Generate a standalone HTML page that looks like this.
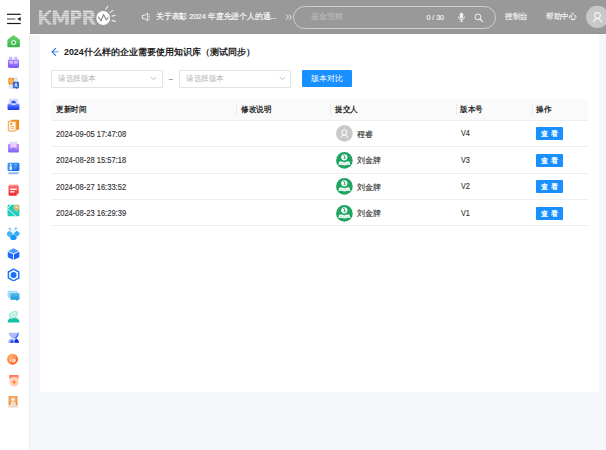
<!DOCTYPE html>
<html><head><meta charset="utf-8">
<style>
*{margin:0;padding:0;box-sizing:border-box}
html,body{width:606px;height:450px;overflow:hidden}
body{background:#f5f7fb;font-family:"Liberation Sans",sans-serif;position:relative;color:#333}
.abs{position:absolute}
#side{left:0;top:0;width:30px;height:450px;background:#fff;box-shadow:inset -1px 0 0 #fff}
#sb{left:29px;top:35px;width:1px;height:415px;background:#e9ebef}
#head{left:30px;top:0;width:576px;height:33.6px;background:#999;box-shadow:inset 0 -1px 0 #929292}
#strip{left:29px;top:33.6px;width:577px;height:1.4px;background:#fff}
#card{left:40px;top:35px;width:559px;height:357px;background:#fff}
.ic{position:absolute;left:7px;width:13px;height:13px}
.t{position:absolute;white-space:nowrap;line-height:1}
.k{-webkit-text-stroke:0.14px currentColor}
.sel{position:absolute;top:70px;height:17.6px;border:1px solid #e3e3e3;border-radius:1px;background:#fff}
.th{position:absolute;top:98.8px;height:22px;left:50.6px;width:537.6px;background:#fafafa;border-bottom:1px solid #efefef}
.row{position:absolute;left:50.6px;width:537.6px;border-bottom:1px solid #efefef}
.sep{position:absolute;top:104px;width:1px;height:11px;background:#ebebeb}
.btn{position:absolute;left:536px;width:27px;height:13px;background:#1890ff;color:#fff;font-size:7.2px;font-weight:bold;text-align:center;line-height:13.4px;border-radius:1px;letter-spacing:0.1px}
</style></head><body>
<div id="side" class="abs">
  <!-- hamburger -->
  <svg class="abs" style="left:5px;top:10px" width="18" height="16" viewBox="5 10 18 16">
    <rect x="7" y="13.7" width="13.7" height="1.2" fill="#1a1a1a"/>
    <rect x="7" y="18.4" width="8.3" height="1.2" fill="#666"/>
    <path d="M20.7 16.9 L17.3 19 L20.7 21.1Z" fill="#1a1a1a"/>
    <rect x="7" y="22.9" width="13.7" height="1.2" fill="#1a1a1a"/>
  </svg>
<svg class="ic" style="top:34.5px" width="14" height="14" viewBox="0 0 14 14"><defs><linearGradient id="g1" x1="0" y1="0" x2="0" y2="1"><stop offset="0" stop-color="#6fd46f"/><stop offset="1" stop-color="#39b249"/></linearGradient></defs><path d="M5.9 0.9 Q7.15 -0.1 8.4 0.9 L13.2 4.7 Q13.9 5.3 13.9 6.2 V11.8 Q13.9 13.3 12.4 13.3 H1.9 Q0.4 13.3 0.4 11.8 V6.2 Q0.4 5.3 1.1 4.7 Z" fill="url(#g1)"/><circle cx="7.2" cy="8.1" r="2.2" fill="none" stroke="#fff" stroke-width="1.05"/><path d="M5.4 9.6 L4.7 10.9 L6.3 10.2 Z" fill="#fff"/></svg>
<svg class="ic" style="top:55.7px" width="14" height="14" viewBox="0 0 14 14"><defs><linearGradient id="g2" x1="0" y1="0" x2="0" y2="1"><stop offset="0" stop-color="#a88bff"/><stop offset="1" stop-color="#7a58f2"/></linearGradient></defs><path d="M2 1.6 Q2 0.7 2.9 0.7 H4.9 Q5.8 0.7 5.8 1.6 V4.6 H2 Z M7.8 1.6 Q7.8 0.7 8.7 0.7 H10.4 Q11.3 0.7 11.3 1.6 V4.6 H7.8 Z" fill="#c7bbff"/><path d="M1 4.8 Q1 4.1 1.7 4.1 H12.3 Q13 4.1 13 4.8 V11.4 Q13 13 11.4 13 H2.6 Q1 13 1 11.4 Z" fill="url(#g2)"/><path d="M2.8 5.4 H5.6 Q6.4 5.4 6.4 6.2 V8.4 H3.6 Q2.8 8.4 2.8 7.6 Z M7.6 5.4 H10.6 Q11.4 5.4 11.4 6.2 V7.6 Q11.4 8.4 10.6 8.4 H7.6 Z" fill="#e6c8ff" opacity="0.8"/></svg>
<svg class="ic" style="top:76.9px" width="14" height="14" viewBox="0 0 14 14"><rect x="1.9" y="0.3" width="9.8" height="12.3" fill="#dde6f8"/><path d="M2.4 1.1 H6.9 Q7.7 1.1 7.7 1.9 V7 Q7.7 7.8 6.9 7.8 H3.6 L2.2 9 V7.8 Q1.4 7.8 1.4 7 V2.1 Q1.4 1.1 2.4 1.1Z" fill="#f39a1e"/><circle cx="4.5" cy="4.3" r="1.5" fill="none" stroke="#fde0b4" stroke-width="0.8"/><path d="M7.1 5.1 H12.2 Q13 5.1 13 5.9 V11.4 Q13 12.2 12.2 12.2 H11.6 L10.6 13.1 L9.8 12.2 H7.1 Q6.3 12.2 6.3 11.4 V5.9 Q6.3 5.1 7.1 5.1Z" fill="#3b6fd6"/><path d="M8.4 10.7 L9.65 6.6 L10.9 10.7 M8.9 9.3 H10.4" stroke="#fff" stroke-width="0.75" fill="none"/></svg>
<svg class="ic" style="top:98.1px" width="14" height="14" viewBox="0 0 14 14"><defs><linearGradient id="g4" x1="0" y1="0" x2="0" y2="1"><stop offset="0" stop-color="#8fa4ff"/><stop offset="0.4" stop-color="#4263ff"/><stop offset="1" stop-color="#1b39e6"/></linearGradient></defs><rect x="1.9" y="0.8" width="10.2" height="6" fill="#d3dbff"/><path d="M4.5 5.6 Q4.1 3.6 6 3.3 Q7 1.9 8.3 3.3 Q10.1 3.5 9.6 5.6 Z" fill="#2f56f5"/><path d="M0.6 6.1 H4.2 L5 7.4 H9 L9.8 6.1 H13.4 V11.8 Q13.4 12.8 12.4 12.8 H1.6 Q0.6 12.8 0.6 11.8 Z" fill="url(#g4)"/></svg>
<svg class="ic" style="top:119.3px" width="14" height="14" viewBox="0 0 14 14"><path d="M4.4 0.7 H12.4 Q13 0.7 13 1.3 V10.9 Q13 11.5 12.4 11.5 H4.4 Z" fill="#f28a1e"/><rect x="1.4" y="2.4" width="8.4" height="10.6" rx="0.7" fill="#fff4e4" stroke="#f39a35" stroke-width="1"/><circle cx="4.6" cy="5.2" r="1.1" fill="#f28a1e"/><path d="M3.6 8 H7.6 M3.6 10 H7.6" stroke="#f6ae60" stroke-width="0.9"/></svg>
<svg class="ic" style="top:140.5px" width="14" height="14" viewBox="0 0 14 14"><defs><linearGradient id="g6" x1="0" y1="0" x2="0" y2="1"><stop offset="0" stop-color="#c98cff"/><stop offset="1" stop-color="#7d66f5"/></linearGradient></defs><rect x="2.6" y="0.8" width="8.8" height="3" fill="#e3d6ff"/><path d="M1.2 3.2 H12.8 V11 Q12.8 12.4 11.4 12.4 H2.6 Q1.2 12.4 1.2 11 Z" fill="url(#g6)"/><path d="M3.6 3.2 V8.4 L7 6.4 L10.4 8.4 V3.2 Z" fill="#f2d9ff" opacity="0.85"/></svg>
<svg class="ic" style="top:161.7px" width="14" height="14" viewBox="0 0 14 14"><defs><linearGradient id="g7" x1="0" y1="0" x2="1" y2="1"><stop offset="0" stop-color="#42a6ff"/><stop offset="1" stop-color="#1462e0"/></linearGradient></defs><rect x="0.6" y="0.7" width="12.8" height="9" rx="1.4" fill="url(#g7)"/><circle cx="4" cy="2.9" r="1" fill="#fff"/><path d="M2.7 8.6 V4.6 H5.3 V8.6" fill="#eaf4ff"/><path d="M7.4 2.8 H11.2 M8.4 4.6 H11.2 M7.4 6.4 H10.2" stroke="#a6ceff" stroke-width="0.6"/><rect x="1.2" y="11" width="11.6" height="2.2" rx="1" fill="#8cbcff"/></svg>
<svg class="ic" style="top:182.9px" width="14" height="14" viewBox="0 0 14 14"><defs><linearGradient id="g8" x1="0" y1="0" x2="0" y2="1"><stop offset="0" stop-color="#ff6a6a"/><stop offset="1" stop-color="#f02828"/></linearGradient></defs><path d="M1.6 3.6 Q1.6 2.4 2.8 2.4 H11.4 Q12.6 2.4 12.6 3.6 V11.2 L10.2 13.6 H2.8 Q1.6 13.6 1.6 12.4 Z" fill="url(#g8)"/><path d="M3.2 1 V3.6 M5.6 1 V3.6 M8 1 V3.6 M10.4 1 V3.6" stroke="#ff9a9a" stroke-width="0.9"/><rect x="3.4" y="5.9" width="7.2" height="1.5" fill="#fff"/><rect x="3.4" y="8.8" width="4.6" height="1.5" fill="#fff"/><path d="M12.6 11.2 L10.2 13.6 V11.8 Q10.2 11.2 10.8 11.2 Z" fill="#ffc2c2"/></svg>
<svg class="ic" style="top:204.1px" width="14" height="14" viewBox="0 0 14 14"><rect x="0.6" y="0.8" width="12.8" height="12.4" rx="1" fill="#1fcdb9"/><path d="M4.4 0.8 L0.6 4.8 L9.6 13.2" stroke="#fff" stroke-width="1" fill="none"/><path d="M10.2 0.9 Q12.9 0.9 12.9 3.7 Q12.9 5.4 10.2 7.9 Q7.5 5.4 7.5 3.7 Q7.5 0.9 10.2 0.9Z" fill="#f4a33b" stroke="#fff" stroke-width="0.5"/><circle cx="10.2" cy="3.6" r="1" fill="#fff"/></svg>
<svg class="ic" style="top:226.6px" width="14" height="14" viewBox="0 0 14 14"><path d="M3.1 2.1 L6.5 4.6 L9.5 1.7" stroke="#c2defc" stroke-width="1" fill="none"/><circle cx="3.1" cy="2.1" r="1.5" fill="#92caff"/><circle cx="9.5" cy="1.7" r="1.5" fill="#92caff"/><rect x="0" y="4.8" width="5.6" height="5.6" rx="1.8" transform="rotate(45 2.8 7.6)" fill="#45b4f5"/><rect x="8" y="4.6" width="5.2" height="5.2" rx="1.7" transform="rotate(45 10.6 7.2)" fill="#35acf5"/><rect x="3.9" y="8.5" width="6" height="6" rx="1.9" transform="rotate(45 6.9 11.5)" fill="#1898f5"/><circle cx="6.6" cy="6.2" r="1.2" fill="#d9ecff" opacity="0.8"/></svg>
<svg class="ic" style="top:246.5px" width="14" height="14" viewBox="0 0 14 14"><path d="M6.4 1.5 Q7 1.2 7.6 1.5 L12.9 4.2 L7 7.1 L1.1 4.2 Z" fill="#4f9cff"/><path d="M0.8 5 L6.5 7.9 V13.7 L1.4 11.2 Q0.8 10.9 0.8 10.2 Z" fill="#1e6cff"/><path d="M13.3 5 L7.5 7.9 V13.7 L12.7 11.2 Q13.3 10.9 13.3 10.2 Z" fill="#1a63f5"/></svg>
<svg class="ic" style="top:267.7px" width="14" height="14" viewBox="0 0 14 14"><path d="M7.1 1.1 L12.7 4.3 V10.7 L7.1 13.9 L1.5 10.7 V4.3 Z" fill="none" stroke="#1f74ff" stroke-width="1.6" stroke-linejoin="round"/><circle cx="7.1" cy="7.5" r="3.2" fill="#1a6ff8"/></svg>
<svg class="ic" style="top:288.9px" width="14" height="14" viewBox="0 0 14 14"><defs><linearGradient id="g13" x1="0" y1="0" x2="0" y2="1"><stop offset="0" stop-color="#5cc0f0"/><stop offset="1" stop-color="#0f8fd8"/></linearGradient></defs><rect x="0.7" y="1.8" width="10.5" height="7.6" rx="1" fill="#a3daf6"/><path d="M3.6 5 Q3.6 4.4 4.2 4.4 H12.8 Q13.4 4.4 13.4 5 V11 Q13.4 11.6 12.8 11.6 H11.6 L10.2 12.9 L9.8 11.6 H4.2 Q3.6 11.6 3.6 11 Z" fill="url(#g13)"/><path d="M2.2 3.6 H9.4" stroke="#d2effc" stroke-width="0.6"/></svg>
<svg class="ic" style="top:310.1px" width="14" height="14" viewBox="0 0 14 14"><path d="M0.6 13.5 Q0.9 7.8 7 7.8 Q13.1 7.8 13.4 13.5 Z" fill="#12c1a4"/><ellipse cx="7" cy="5" rx="5.2" ry="3.4" transform="rotate(-28 7 5)" fill="#a6e9dc"/><ellipse cx="7" cy="5" rx="3" ry="1.5" transform="rotate(-28 7 5)" fill="none" stroke="#fff" stroke-width="0.8"/><path d="M2.4 9.6 Q7 6.6 11.6 9.6" stroke="#dff8f3" stroke-width="0.6" fill="none"/></svg>
<svg class="ic" style="top:331.3px" width="14" height="14" viewBox="0 0 14 14"><path d="M1.6 1.8 H12.6 Q12.4 5 9.8 7 L7.2 8.6 L4.6 7 Q1.9 5 1.6 1.8Z" fill="#a9bcff"/><path d="M7.4 8.4 Q10.8 6.4 11.8 2 L12.8 2 Q12.6 5.6 10.2 7.9 Z" fill="#3f66f7"/><path d="M1.2 12.6 Q1.5 9.6 4.4 8.2 L7.2 9.8 L10 8.2 Q12.9 9.6 13 12.6 Z" fill="#8aa2ff"/><path d="M8 12.6 Q8.4 9.6 10 8.2 Q12.9 9.6 13 12.6 Z" fill="#0f2fe0"/><path d="M3.8 12.6 Q4.4 10.4 5.6 9.6 Q6.6 10.8 6.8 12.6Z" fill="#1a3ae6"/></svg>
<svg class="ic" style="top:352.5px" width="14" height="14" viewBox="0 0 14 14"><defs><linearGradient id="g16" x1="0" y1="0" x2="1" y2="1"><stop offset="0" stop-color="#ffbb66"/><stop offset="1" stop-color="#ff4410"/></linearGradient></defs><circle cx="5.95" cy="6.65" r="5.9" fill="url(#g16)"/><path d="M5.8 2.9 Q2.4 5.4 3.4 9.4" stroke="#ffe6cf" stroke-width="1" fill="none" stroke-linecap="round"/><circle cx="7.2" cy="8" r="1.9" fill="#ffc9b0" stroke="#fff0e6" stroke-width="0.8"/><path d="M8.4 3.6 L9.4 4.8" stroke="#ffe0c8" stroke-width="0.8" stroke-linecap="round"/><path d="M11.2 11 L12.6 12.8" stroke="#ffcfae" stroke-width="0.8"/></svg>
<svg class="ic" style="top:373.7px" width="14" height="14" viewBox="0 0 14 14"><defs><linearGradient id="g17c" x1="0" y1="0" x2="0" y2="1"><stop offset="0" stop-color="#ff6d4d"/><stop offset="1" stop-color="#ffb399"/></linearGradient><radialGradient id="g17" cx="0.5" cy="0.5" r="0.6"><stop offset="0" stop-color="#ffb88f"/><stop offset="1" stop-color="#ffe3d4"/></radialGradient></defs><rect x="2.2" y="1.1" width="10.4" height="4.6" rx="0.8" fill="url(#g17c)"/><circle cx="7.6" cy="8.6" r="5.2" fill="url(#g17)"/><circle cx="7.7" cy="8.8" r="1.3" fill="#ff7a1a"/></svg>
<svg class="ic" style="top:394.9px" width="14" height="14" viewBox="0 0 14 14"><defs><radialGradient id="g18" cx="0.5" cy="0.35" r="0.7"><stop offset="0" stop-color="#f6c38c"/><stop offset="1" stop-color="#e8872a"/></radialGradient></defs><rect x="1.7" y="1.1" width="9.6" height="9.9" fill="url(#g18)"/><circle cx="6.6" cy="4.6" r="2" fill="#f9e3cc"/><path d="M3.4 11 Q3.6 6.8 6.6 6.8 Q9.6 6.8 9.8 11 Z" fill="#f6dcc2"/><rect x="1" y="11.2" width="11.2" height="2.2" rx="0.6" fill="#ead6c6"/></svg>
</div>
<div id="sb" class="abs"></div>
<div id="head" class="abs"></div>
<!-- logo -->
<svg class="abs" style="left:36px;top:3px" width="84" height="26" viewBox="36 3 84 26">
  <defs>
    <pattern id="stripes" x="0" y="10.9" width="10" height="1.95" patternUnits="userSpaceOnUse">
      <rect x="0" y="1.05" width="10" height="0.9" fill="#a6a6a6"/>
    </pattern>
  </defs>
  <clipPath id="kclip">
    <path d="M39 10.6 H42.3 V16.6 L48.4 10.6 H51.8 L45.2 17.4 L52 24.5 H48.4 L43.6 19.4 L42.3 20.6 V24.5 H39 Z"/>
    <path d="M52.9 24.5 V10.6 H56.6 L60.6 18.2 L64.6 10.6 H68.6 V24.5 H65.3 V16.2 L61.9 22.2 H59.3 L56.2 16.2 V24.5 Z"/>
    <path d="M71 24.5 V10.6 H77.4 Q81.4 10.6 81.4 14.9 Q81.4 19.2 77.4 19.2 H74.4 V24.5 Z M74.4 13.5 V16.3 H77 Q78.1 16.3 78.1 14.9 Q78.1 13.5 77 13.5 Z"/>
    <path d="M83.4 24.5 V10.6 H90 Q94.4 10.6 94.4 14.7 Q94.4 17.6 92 18.6 L95.8 24.5 H91.9 L88.7 19.2 H86.8 V24.5 Z M86.8 13.5 V16.3 H89.6 Q90.9 16.3 90.9 14.9 Q90.9 13.5 89.6 13.5 Z"/>
  </clipPath><g fill="#ececec">
    <path d="M39 10.6 H42.3 V16.6 L48.4 10.6 H51.8 L45.2 17.4 L52 24.5 H48.4 L43.6 19.4 L42.3 20.6 V24.5 H39 Z"/>
    <path d="M52.9 24.5 V10.6 H56.6 L60.6 18.2 L64.6 10.6 H68.6 V24.5 H65.3 V16.2 L61.9 22.2 H59.3 L56.2 16.2 V24.5 Z"/>
    <path d="M71 24.5 V10.6 H77.4 Q81.4 10.6 81.4 14.9 Q81.4 19.2 77.4 19.2 H74.4 V24.5 Z M74.4 13.5 V16.3 H77 Q78.1 16.3 78.1 14.9 Q78.1 13.5 77 13.5 Z"/>
    <path d="M83.4 24.5 V10.6 H90 Q94.4 10.6 94.4 14.7 Q94.4 17.6 92 18.6 L95.8 24.5 H91.9 L88.7 19.2 H86.8 V24.5 Z M86.8 13.5 V16.3 H89.6 Q90.9 16.3 90.9 14.9 Q90.9 13.5 89.6 13.5 Z"/>
  </g>
  <rect x="38" y="10" width="59" height="16" fill="url(#stripes)" clip-path="url(#kclip)"/>
  <circle cx="103.2" cy="18" r="6.9" fill="#fff"/>
  <path d="M98.4 17.2 L101.1 20.8 L103.6 14.5 L106.3 20 L108.2 17.4" stroke="#8a8a8a" stroke-width="1.15" fill="none" stroke-linejoin="round" stroke-linecap="round"/>
  <g stroke="#f2f2f2" stroke-width="1.1" stroke-linecap="round">
    <path d="M105.8 9.2 L107.8 6.3"/>
    <path d="M110.2 12.4 L113 10.4"/>
    <path d="M112 16.1 L115.3 15.2"/>
    <path d="M112 20.5 L115.3 21.4"/>
  </g>
</svg>
<!-- notice -->
<svg class="abs" style="left:141px;top:12px" width="11" height="10" viewBox="0 0 11 10">
  <path d="M1.3 3.4 H3.4 L6.7 1.2 V8.8 L3.4 6.6 H1.3 Z" stroke="#f0f0f0" stroke-width="1" fill="none" stroke-linejoin="round"/>
  <circle cx="8.6" cy="2.4" r="0.5" fill="#eee"/><circle cx="8.6" cy="4.6" r="0.5" fill="#eee"/><circle cx="8.6" cy="6.8" r="0.5" fill="#eee"/>
</svg>
<div class="t" style="left:156px;top:13px;font-size:8px;color:#f8f8f8;-webkit-text-stroke:0.2px #f8f8f8;transform:scaleX(0.97);transform-origin:0 0">关于表彰 <span style="font-size:7.8px">2024</span> 年度先进个人的通<span style="letter-spacing:-0.2px">...</span></div>
<svg class="abs" style="left:285px;top:13px" width="8" height="8" viewBox="0 0 8 8"><path d="M1.2 1.6 L3.4 4.1 L1.2 6.6 M4.2 1.6 L6.4 4.1 L4.2 6.6" stroke="#f0f0f0" stroke-width="1" fill="none"/></svg>
<!-- search -->
<div class="abs" style="left:293px;top:6px;width:203px;height:23px;border:1px solid #cfcfcf;border-radius:12px"></div>
<div class="t" style="left:310.5px;top:13px;font-size:8px;color:#bcbcbc;-webkit-text-stroke:0.12px #bcbcbc">基金理财</div>
<div class="t" style="left:426.5px;top:14px;font-size:7px;color:#f4f4f4;-webkit-text-stroke:0.15px #f4f4f4">0 / 30</div>
<svg class="abs" style="left:457px;top:11.8px" width="9" height="10" viewBox="0 0 9 10">
  <rect x="2.8" y="0.8" width="3.4" height="5.6" rx="1.7" fill="#f2f2f2"/>
  <path d="M1.4 4.6 Q1.4 7.6 4.5 7.6 Q7.6 7.6 7.6 4.6 M4.5 7.6 V9.2 M3 9.3 H6" stroke="#f2f2f2" stroke-width="0.9" fill="none"/>
</svg>
<svg class="abs" style="left:473.8px;top:12.8px" width="10" height="10" viewBox="0 0 10 10">
  <circle cx="3.9" cy="3.9" r="2.9" stroke="#f2f2f2" stroke-width="1" fill="none"/>
  <path d="M6 6 L8.6 8.6" stroke="#f2f2f2" stroke-width="1.1" stroke-linecap="round"/>
</svg>
<div class="t" style="left:505px;top:13.4px;font-size:7.8px;color:#fafafa;transform:scaleX(0.96);transform-origin:0 0;-webkit-text-stroke:0.12px #fafafa">控制台</div>
<div class="t" style="left:546.3px;top:13.4px;font-size:7.8px;color:#fafafa;transform:scaleX(0.94);transform-origin:0 0;-webkit-text-stroke:0.12px #fafafa">帮助中心</div>
<svg class="abs" style="left:585px;top:5px" width="21" height="24" viewBox="585 5 21 24">
  <circle cx="597.3" cy="16.9" r="11.2" fill="#c8c8c8"/>
  <circle cx="597.4" cy="15.5" r="2.9" stroke="#f4f4f4" stroke-width="1.1" fill="none"/>
  <path d="M593.4 21.8 Q594.6 18.6 597.4 18.6 Q600.2 18.6 601.5 21.8" stroke="#f4f4f4" stroke-width="1.1" fill="none" stroke-linecap="round"/>
</svg>
<div id="strip" class="abs"></div>
<div id="card" class="abs"></div>

<!-- title -->
<svg class="abs" style="left:48px;top:45px" width="15" height="15" viewBox="48 45 15 15"><path d="M52.3 51.8 H58.6" stroke="#6f9be6" stroke-width="1.1" fill="none"/><path d="M55.6 48.4 L52.1 51.8 L55.6 55.3" stroke="#2f6bd8" stroke-width="1.1" fill="none" stroke-linecap="round" stroke-linejoin="round"/></svg>
<div class="t" style="left:64px;top:48px;font-size:8.9px;font-weight:bold;color:#222">2024什么样的企业需要使用知识库（测试同步）</div>

<!-- filters -->
<div class="sel" style="left:50.6px;width:112px"></div>
<div class="t" style="left:57.5px;top:75.2px;font-size:8px;color:#b4b4b4;transform:scaleX(0.95);transform-origin:0 0">请选择版本</div>
<svg class="abs" style="left:150px;top:76px" width="7" height="5" viewBox="0 0 7 5"><path d="M0.7 0.9 L3.5 3.7 L6.3 0.9" stroke="#b4b4b4" stroke-width="0.9" fill="none"/></svg>
<div class="t" style="left:168.5px;top:75.5px;font-size:8px;color:#555">~</div>
<div class="sel" style="left:179.2px;width:111.6px"></div>
<div class="t" style="left:186px;top:75.2px;font-size:8px;color:#b4b4b4;transform:scaleX(0.95);transform-origin:0 0">请选择版本</div>
<svg class="abs" style="left:278.5px;top:76px" width="7" height="5" viewBox="0 0 7 5"><path d="M0.7 0.9 L3.5 3.7 L6.3 0.9" stroke="#b4b4b4" stroke-width="0.9" fill="none"/></svg>
<div class="abs" style="left:302px;top:69.8px;width:49.5px;height:17.7px;background:#1890ff;border-radius:1px"></div>
<div class="t" style="left:310.8px;top:75px;font-size:7.7px;color:#fff">版本对比</div>

<!-- table -->
<div class="th"></div>
<div class="sep" style="left:236px"></div>
<div class="sep" style="left:330px"></div>
<div class="sep" style="left:455.5px"></div>
<div class="sep" style="left:531.5px"></div>
<div class="t" style="left:55.5px;top:106px;font-size:7.7px;font-weight:bold;color:#2a2a2a;transform:scaleX(0.94);transform-origin:0 0">更新时间</div>
<div class="t" style="left:241px;top:106px;font-size:7.7px;font-weight:bold;color:#2a2a2a;transform:scaleX(0.94);transform-origin:0 0">修改说明</div>
<div class="t" style="left:335px;top:106px;font-size:7.7px;font-weight:bold;color:#2a2a2a;transform:scaleX(0.94);transform-origin:0 0">提交人</div>
<div class="t" style="left:460px;top:106px;font-size:7.7px;font-weight:bold;color:#2a2a2a;transform:scaleX(0.94);transform-origin:0 0">版本号</div>
<div class="t" style="left:536px;top:106px;font-size:7.7px;font-weight:bold;color:#2a2a2a;transform:scaleX(0.94);transform-origin:0 0">操作</div>

<div class="row" style="top:121px;height:26px"></div>
<div class="row" style="top:147px;height:26.5px"></div>
<div class="row" style="top:173px;height:26.5px"></div>
<div class="row" style="top:199.5px;height:26.5px"></div>

<div class="t k" style="left:55.5px;top:129.9px;font-size:8.3px;color:#333;transform:scaleX(0.91);transform-origin:0 0">2024-09-05 17:47:08</div>
<div class="t k" style="left:55.5px;top:156.4px;font-size:8.3px;color:#333;transform:scaleX(0.91);transform-origin:0 0">2024-08-28 15:57:18</div>
<div class="t k" style="left:55.5px;top:182.9px;font-size:8.3px;color:#333;transform:scaleX(0.91);transform-origin:0 0">2024-08-27 16:33:52</div>
<div class="t k" style="left:55.5px;top:209.4px;font-size:8.3px;color:#333;transform:scaleX(0.91);transform-origin:0 0">2024-08-23 16:29:39</div>

<div class="t k" style="left:357px;top:130.7px;font-size:7.6px;color:#333">程睿</div>
<div class="t k" style="left:357px;top:157.2px;font-size:7.6px;color:#333">刘金牌</div>
<div class="t k" style="left:357px;top:183.7px;font-size:7.6px;color:#333">刘金牌</div>
<div class="t k" style="left:357px;top:210.2px;font-size:7.6px;color:#333">刘金牌</div>

<div class="t k" style="left:460.8px;top:129.0px;font-size:8.6px;color:#333;transform:scaleX(0.84);transform-origin:0 0">V4</div>
<div class="t k" style="left:460.8px;top:155.5px;font-size:8.6px;color:#333;transform:scaleX(0.84);transform-origin:0 0">V3</div>
<div class="t k" style="left:460.8px;top:182.0px;font-size:8.6px;color:#333;transform:scaleX(0.84);transform-origin:0 0">V2</div>
<div class="t k" style="left:460.8px;top:208.5px;font-size:8.6px;color:#333;transform:scaleX(0.84);transform-origin:0 0">V1</div>

<div class="btn" style="top:127px">查 看</div>
<div class="btn" style="top:153.5px">查 看</div>
<div class="btn" style="top:180px">查 看</div>
<div class="btn" style="top:206.5px">查 看</div>

<!-- avatars -->
<svg class="abs" style="left:335.5px;top:125px" width="17" height="17" viewBox="0 0 17 17"><circle cx="8.4" cy="8.4" r="8.3" fill="#c9c9c9"/><circle cx="8.3" cy="7.4" r="2.5" fill="none" stroke="#fff" stroke-width="1"/><path d="M5 12.4 Q5.4 9.9 8.3 9.9 Q11.2 9.9 11.6 12.4" fill="none" stroke="#fff" stroke-width="1" stroke-linecap="round"/></svg>
<svg class="abs" style="left:335.5px;top:151.5px" width="17" height="17" viewBox="0 0 17 17"><circle cx="8.4" cy="8.4" r="8.3" fill="#1fa462"/><circle cx="8.3" cy="5.3" r="3.1" fill="#fff"/><path d="M7.6 3.4 Q9.4 3.4 8.8 5 L7.9 6.6 Q8.6 7.2 9.6 6.2" stroke="#1fa462" stroke-width="0.9" fill="none" stroke-linecap="round"/><path d="M2.3 12.9 L3.4 9.6 Q6.2 9 8.4 10.4 Q10.6 9 13.4 9.6 L14.5 12.9 Q11.4 12.2 8.4 13.4 Q5.4 12.2 2.3 12.9 Z" fill="#fff"/><path d="M3.4 11.6 Q6 11.1 8.4 12.2 Q10.8 11.1 13.4 11.6" stroke="#7cc9a2" stroke-width="0.45" fill="none"/></svg>
<svg class="abs" style="left:335.5px;top:178px" width="17" height="17" viewBox="0 0 17 17"><circle cx="8.4" cy="8.4" r="8.3" fill="#1fa462"/><circle cx="8.3" cy="5.3" r="3.1" fill="#fff"/><path d="M7.6 3.4 Q9.4 3.4 8.8 5 L7.9 6.6 Q8.6 7.2 9.6 6.2" stroke="#1fa462" stroke-width="0.9" fill="none" stroke-linecap="round"/><path d="M2.3 12.9 L3.4 9.6 Q6.2 9 8.4 10.4 Q10.6 9 13.4 9.6 L14.5 12.9 Q11.4 12.2 8.4 13.4 Q5.4 12.2 2.3 12.9 Z" fill="#fff"/><path d="M3.4 11.6 Q6 11.1 8.4 12.2 Q10.8 11.1 13.4 11.6" stroke="#7cc9a2" stroke-width="0.45" fill="none"/></svg>
<svg class="abs" style="left:335.5px;top:204.5px" width="17" height="17" viewBox="0 0 17 17"><circle cx="8.4" cy="8.4" r="8.3" fill="#1fa462"/><circle cx="8.3" cy="5.3" r="3.1" fill="#fff"/><path d="M7.6 3.4 Q9.4 3.4 8.8 5 L7.9 6.6 Q8.6 7.2 9.6 6.2" stroke="#1fa462" stroke-width="0.9" fill="none" stroke-linecap="round"/><path d="M2.3 12.9 L3.4 9.6 Q6.2 9 8.4 10.4 Q10.6 9 13.4 9.6 L14.5 12.9 Q11.4 12.2 8.4 13.4 Q5.4 12.2 2.3 12.9 Z" fill="#fff"/><path d="M3.4 11.6 Q6 11.1 8.4 12.2 Q10.8 11.1 13.4 11.6" stroke="#7cc9a2" stroke-width="0.45" fill="none"/></svg>
</body></html>
